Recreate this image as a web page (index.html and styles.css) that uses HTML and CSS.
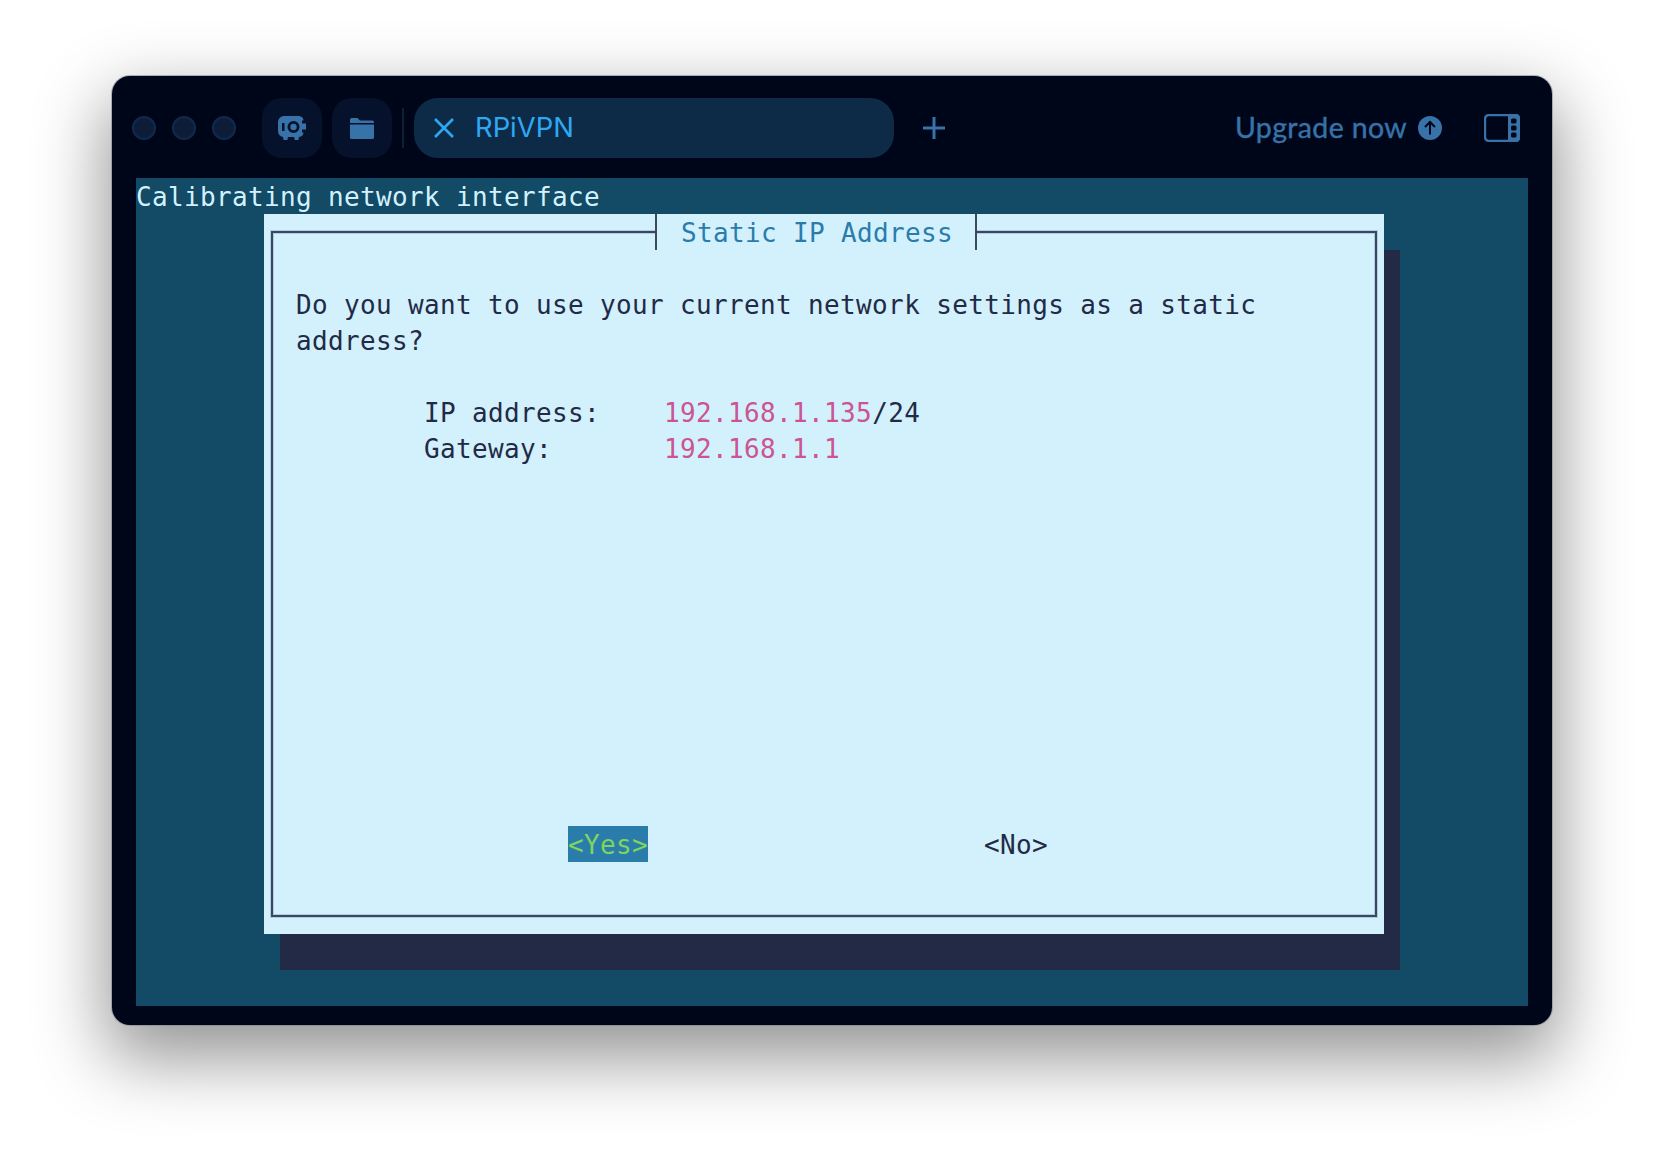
FILE: index.html
```
<!DOCTYPE html>
<html lang="en">
<head>
<meta charset="utf-8">
<title>RPiVPN</title>
<link rel="stylesheet" href="styles.css">
</head>
<body>
<main class="window">
  <header class="toolbar">
    <div class="lights"><span class="light"></span><span class="light"></span><span class="light"></span></div>
    <button class="tool">
      <svg class="icon-safe" viewBox="0 0 28 24"><path fill-rule="evenodd" d="M6 0H21a5 5 0 0 1 4.600 4.500h-1.600v3h4v6h-4v3h1.600A5 5 0 0 1 21 21l-.6 3h-3.600l-.7-3H10l-.7 3H5.600l-.6-3.100A6 6 0 0 1 0 15V6a6 6 0 0 1 6-6zM4 7v8h2.500V7zM15.500 5a6 6 0 1 0 0 12a6 6 0 0 0 0-12zM15.500 7.800a3.200 3.200 0 1 1 0 6.400a3.200 3.200 0 0 1 0-6.400z"/></svg>
    </button>
    <button class="tool">
      <svg class="icon-folder" viewBox="0 0 24 21"><path d="M0 1.500A1.500 1.500 0 0 1 1.500 0h6l2.500 2.500h12.500A1.500 1.500 0 0 1 24 4v1H0zM0 6.500h24V19.500a1.500 1.500 0 0 1-1.500 1.500h-21A1.500 1.500 0 0 1 0 19.500z"/></svg>
    </button>
    <span class="divider"></span>
    <div class="tab">
      <svg class="icon-close" viewBox="0 0 20 20"><path d="M1 1l18 18M19 1L1 19"/></svg>
      <span class="tab-title">RPiVPN</span>
    </div>
    <svg class="icon-plus" viewBox="0 0 24 24"><path d="M12 1v22M1 12h22"/></svg>
    <div class="upgrade">
      <span class="upgrade-label">Upgrade now</span>
      <svg class="icon-up" viewBox="0 0 24 24"><circle cx="12" cy="12" r="12" class="up-disc"/><path class="up-arrow" d="M12 18.500V6.500M7 11l5-5 5 5"/></svg>
    </div>
    <svg class="icon-panel" viewBox="0 0 36 28">
      <rect class="panel-frame" x="1" y="1" width="34" height="26" rx="4"/>
      <path class="panel-side" d="M24 0h8a4 4 0 0 1 4 4v20a4 4 0 0 1-4 4h-8z"/>
      <rect class="panel-dot" x="27" y="4.500" width="5.500" height="5" rx="1.500"/>
      <rect class="panel-dot" x="27" y="11.500" width="5.500" height="5" rx="1.500"/>
      <rect class="panel-dot" x="27" y="18.500" width="5.500" height="5" rx="1.500"/>
    </svg>
  </header>
  <section class="terminal">
    <div class="row status">Calibrating network interface</div>
    <div class="dialog">
      <div class="title"><span class="row">Static IP Address</span></div>
      <div class="frame">
        <div class="row">Do you want to use your current network settings as a static</div>
        <div class="row">address?</div>
        <div class="row"> </div>
        <div class="row">        IP address:    <span class="value">192.168.1.135</span>/24</div>
        <div class="row">        Gateway:       <span class="value">192.168.1.1</span></div>
        <div class="buttons">
          <span class="row btn-active">&lt;Yes&gt;</span>
          <span class="row">&lt;No&gt;</span>
        </div>
      </div>
    </div>
  </section>
</main>
</body>
</html>
```
FILE: styles.css
```
* { box-sizing: border-box; }
html, body { margin: 0; height: 100%; }
body {
  background: #fff;
  padding: 76px 112px 0;
  overflow: hidden;
}
.window {
  width: 1440px;
  height: 949px;
  background: #00061a;
  border-radius: 18px;
  padding: 22px 24px 19px;
  box-shadow: 0 0 0 1px rgba(130,135,150,.6), 0 28px 70px 6px rgba(0,0,0,.42);
}
.toolbar {
  display: flex;
  align-items: center;
  height: 60px;
  margin: 0 8px 20px -4px;
}
.lights { display: flex; gap: 16px; margin-right: 26px; }
.light {
  width: 24px;
  height: 24px;
  border-radius: 50%;
  background: #0d1d38;
  border: 2px solid #13294a;
}
.tool {
  width: 60px;
  height: 60px;
  border: 0;
  padding: 0;
  margin-right: 10px;
  border-radius: 20px;
  background: #06122b;
  display: flex;
  align-items: center;
  justify-content: center;
}
.icon-safe { width: 28px; height: 24px; fill: #3772a8; }
.icon-folder { width: 24px; height: 21px; fill: #3772a8; }
.divider { width: 2px; height: 40px; background: #0c2038; margin-right: 10px; }
.tab {
  width: 480px;
  height: 60px;
  border-radius: 24px;
  background: #0d2a47;
  display: flex;
  align-items: center;
  padding-left: 20px;
  gap: 21px;
}
.icon-close { width: 20px; height: 20px; fill: none; stroke: #2fa8f4; stroke-width: 2.6; }
.tab-title { font: 400 27.4px/1 Inter, sans-serif; color: #2fa8f4; }
.icon-plus { width: 24px; height: 24px; margin-left: 28px; fill: none; stroke: #3772a8; stroke-width: 3; }
.upgrade {
  margin-left: auto;
  display: flex;
  align-items: center;
  gap: 11px;
  font: 400 28.5px/1 Lato, sans-serif;
  letter-spacing: .35px;
  color: #3772a8;
}
.upgrade-label { padding-bottom: 2px; -webkit-text-stroke: .4px #3772a8; }
.icon-up { width: 24px; height: 24px; }
.up-disc { fill: #3772a8; }
.up-arrow { fill: none; stroke: #00061a; stroke-width: 2; }
.icon-panel { width: 36px; height: 28px; margin-left: 42px; }
.panel-frame { fill: none; stroke: #3772a8; stroke-width: 2.4; }
.panel-side { fill: #3772a8; }
.panel-dot { fill: #00061a; }
.terminal {
  height: 828px;
  background: #134a66;
  color: #d2f1fd;
  font: 400 26px/38px "DejaVu Sans Mono", monospace;
  letter-spacing: .35px;
}
.row { display: block; height: 36px; white-space: pre; }
.dialog {
  position: relative;
  width: 1120px;
  height: 720px;
  margin-left: 128px;
  padding: 17px 7px;
  background: #d2f1fd;
  color: #232a45;
  box-shadow: 16px 36px 0 #232a45;
}
.title {
  position: absolute;
  top: 0;
  left: 391px;
  width: 322px;
  height: 36px;
  padding-left: 24px;
  color: #2a7cab;
  background: #d2f1fd;
  border-left: 2px solid #3c4661;
  border-right: 2px solid #3c4661;
}
.frame {
  height: 100%;
  display: flex;
  flex-direction: column;
  padding: 53px 23px;
  border: 2px solid #3c4661;
  box-shadow: 0 0 0 1px rgba(60,75,120,.22), inset 0 0 0 1px rgba(60,75,120,.22);
}
.value { color: #cc5490; }
.buttons { margin-top: auto; display: flex; padding-left: 272px; gap: 336px; }
.btn-active { width: 80px; background: #2a7cab; color: #7fd35f; }
```
